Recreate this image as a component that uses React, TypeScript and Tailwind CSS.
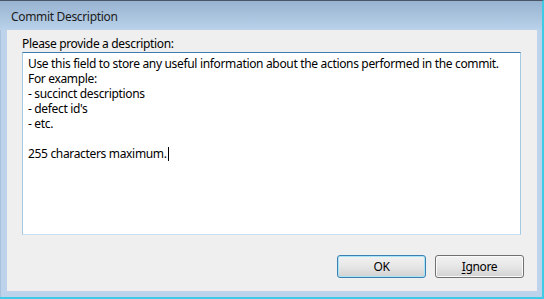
import * as React from 'react';

const lines = [
  'Use this field to store any useful information about the actions performed in the commit.',
  'For example:',
  '- succinct descriptions',
  "- defect id's",
  '- etc.',
  '',
];

export default function App() {
  return (
    <div className="w-[544px] h-[299px] flex flex-col bg-[#bcd3eb] border-t border-t-[#4a5666] border-r-2 border-r-[#3fcbe6] border-b-2 border-b-[#3fcbe6] text-[12px] tracking-[-0.33px] text-black [font-family:'Noto_Sans',sans-serif] overflow-hidden">
      {/* Title bar */}
      <div className="h-[29px] shrink-0 flex items-center pl-[11px] pt-[2px] bg-gradient-to-b from-[#98b3d1] to-[#bad2ea] text-[#1b1b1b]">
        Commit Description
      </div>

      {/* Client area */}
      <div className="flex-1 min-w-0 flex pl-[6px] pr-[5px] pb-[6px] border-l border-l-[#a9c2dc]">
        <div className="flex-1 min-w-0 flex flex-col bg-[#efefef] pl-[15px] pr-[13px] pt-[6px]">
          <div className="h-[16px] leading-[16px]">Please provide a description:</div>
          <div className="mr-[3px] h-[183px] overflow-hidden bg-white border border-[#a4c9e3] border-t-[#3d7bad] border-b-[#c6def0] pl-[5px] pt-[3px] leading-[15px]">
            {lines.map((l, i) => (
              <div key={i} className="h-[15px] whitespace-pre">{l}</div>
            ))}
            <div className="h-[15px] flex items-center">
              <span>255 characters maximum.</span>
              <span className="inline-block w-px h-[14px] bg-black ml-px" />
            </div>
          </div>

          {/* Buttons */}
          <div className="mt-[20px] flex justify-end gap-[9px]">
            <button className="w-[89px] h-[23px] rounded-[3px] border border-[#3c7fb1] bg-gradient-to-b from-[#f2f2f2] via-[#e6e6e6] to-[#d2d2d2] shadow-[inset_0_0_0_1px_#a7e4f8] text-[12px] leading-none">
              OK
            </button>
            <button className="w-[89px] h-[23px] rounded-[3px] border border-[#707070] bg-gradient-to-b from-[#f2f2f2] via-[#e6e6e6] to-[#d2d2d2] shadow-[inset_0_0_0_1px_#fafafa] text-[12px] leading-none">
              <span className="underline underline-offset-2">I</span>gnore
            </button>
          </div>
        </div>
      </div>
    </div>
  );
}
